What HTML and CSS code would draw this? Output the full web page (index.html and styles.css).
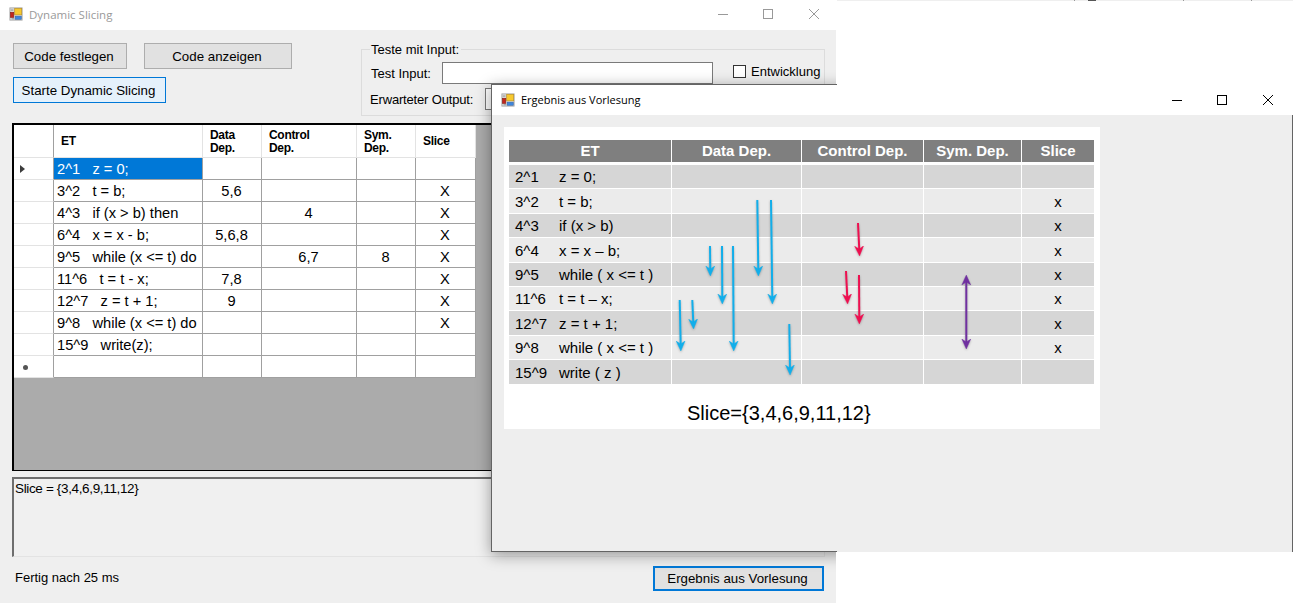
FILE: index.html
```html
<!DOCTYPE html>
<html lang="de">
<head>
<meta charset="utf-8">
<title>Dynamic Slicing</title>
<link rel="stylesheet" href="styles.css">
</head>
<body>
<svg class="defs" width="0" height="0" aria-hidden="true">
  <defs>
    <symbol id="app" viewBox="0 0 16 16">
      <rect x="1" y="1" width="14" height="14" fill="#d9d9d9" stroke="#a8a8a8"/>
      <rect x="6.5" y="1.5" width="8" height="7.5" fill="#f7c92e" stroke="#b9912a" stroke-width=".8"/>
      <rect x="1.5" y="6" width="4" height="6" fill="#c3261c" stroke="#7f1c14" stroke-width=".6"/>
      <rect x="7" y="10.5" width="7" height="3.5" fill="#3f86dc" stroke="#2d62a8" stroke-width=".6"/>
      <rect x="2" y="3" width="3" height="1" fill="#8a8a8a"/>
      <rect x="3" y="13" width="3" height="1" fill="#8a8a8a"/>
    </symbol>
    <symbol id="i-min" viewBox="0 0 10 10"><path d="M0 5.5H10" stroke="currentColor" fill="none"/></symbol>
    <symbol id="i-max" viewBox="0 0 10 10"><rect x=".5" y=".5" width="9" height="9" stroke="currentColor" fill="none"/></symbol>
    <symbol id="i-close" viewBox="0 0 10 10"><path d="M0 0L10 10M10 0L0 10" stroke="currentColor" fill="none"/></symbol>
    <marker id="m-blue" viewBox="0 0 10 10" refX="4" refY="5" markerWidth="10" markerHeight="10" markerUnits="userSpaceOnUse" orient="auto"><path d="M0 .5L10 5L0 9.5L3 5Z" fill="#12aeea" stroke="#12aeea" stroke-width=".4"/></marker>
    <marker id="m-red" viewBox="0 0 10 10" refX="4" refY="5" markerWidth="10" markerHeight="10" markerUnits="userSpaceOnUse" orient="auto"><path d="M0 .5L10 5L0 9.5L3 5Z" fill="#ee0f50" stroke="#ee0f50" stroke-width=".4"/></marker>
    <marker id="m-purple" viewBox="0 0 10 10" refX="4" refY="5" markerWidth="10" markerHeight="10" markerUnits="userSpaceOnUse" orient="auto-start-reverse"><path d="M0 .5L10 5L0 9.5L3 5Z" fill="#7030a0" stroke="#7030a0" stroke-width=".4"/></marker>
  </defs>
</svg>

<div class="top-strip"></div>

<div class="window main-window">
  <div class="titlebar titlebar-main">
    <svg class="app-icon"><use href="#app"/></svg>
    <span class="title title-inactive">Dynamic Slicing</span>
    <div class="controls controls-inactive">
      <svg class="ctl"><use href="#i-min"/></svg>
      <svg class="ctl"><use href="#i-max"/></svg>
      <svg class="ctl ctl-close"><use href="#i-close"/></svg>
    </div>
  </div>
  <div class="content">
    <div class="top-row">
      <div class="button-col">
        <div class="button-row">
          <div class="btn btn-set">Code festlegen</div>
          <div class="btn btn-show">Code anzeigen</div>
        </div>
        <div class="btn btn-start">Starte Dynamic Slicing</div>
      </div>
      <div class="group">
        <div class="legend">Teste mit Input:</div>
        <div class="group-row group-row-first">
          <span class="lbl lbl-input">Test Input:</span>
          <div class="input input-test"></div>
          <div class="check"></div>
          <span class="lbl lbl-check">Entwicklung</span>
        </div>
        <div class="group-row">
          <span class="lbl lbl-output">Erwarteter Output:</span>
          <div class="input input-output"></div>
        </div>
      </div>
    </div>

    <div class="grid">
      <table class="dgv">
        <colgroup>
          <col class="c0"><col class="c1"><col class="c2"><col class="c3"><col class="c4"><col class="c5">
        </colgroup>
        <thead>
          <tr>
            <th class="rh"></th>
            <th class="h-et">ET</th>
            <th>Data<br>Dep.</th>
            <th>Control<br>Dep.</th>
            <th>Sym.<br>Dep.</th>
            <th>Slice</th>
          </tr>
        </thead>
        <tbody>
          <tr><td class="rh"><span class="cur"></span></td><td class="code sel">2^1   z = 0;</td><td></td><td></td><td></td><td></td></tr>
          <tr><td class="rh"></td><td class="code">3^2   t = b;</td><td>5,6</td><td></td><td></td><td>X</td></tr>
          <tr><td class="rh"></td><td class="code">4^3   if (x &gt; b) then</td><td></td><td>4</td><td></td><td>X</td></tr>
          <tr><td class="rh"></td><td class="code">6^4   x = x - b;</td><td>5,6,8</td><td></td><td></td><td>X</td></tr>
          <tr><td class="rh"></td><td class="code">9^5   while (x &lt;= t) do</td><td></td><td>6,7</td><td>8</td><td>X</td></tr>
          <tr><td class="rh"></td><td class="code">11^6   t = t - x;</td><td>7,8</td><td></td><td></td><td>X</td></tr>
          <tr><td class="rh"></td><td class="code">12^7   z = t + 1;</td><td>9</td><td></td><td></td><td>X</td></tr>
          <tr><td class="rh"></td><td class="code">9^8   while (x &lt;= t) do</td><td></td><td></td><td></td><td>X</td></tr>
          <tr><td class="rh"></td><td class="code">15^9   write(z);</td><td></td><td></td><td></td><td></td></tr>
          <tr><td class="rh rh-new"><span class="dot"></span></td><td class="code"></td><td></td><td></td><td></td><td></td></tr>
        </tbody>
      </table>
    </div>

    <div class="output">Slice = {3,4,6,9,11,12}</div>

    <div class="status-row">
      <span class="lbl">Fertig nach 25 ms</span>
      <div class="btn btn-result">Ergebnis aus Vorlesung</div>
    </div>
  </div>
  <div class="win-shadow"></div>
</div>

<div class="window result-window">
  <div class="titlebar titlebar-result">
    <svg class="app-icon"><use href="#app"/></svg>
    <span class="title title-result">Ergebnis aus Vorlesung</span>
    <div class="controls">
      <svg class="ctl"><use href="#i-min"/></svg>
      <svg class="ctl"><use href="#i-max"/></svg>
      <svg class="ctl ctl-close"><use href="#i-close"/></svg>
    </div>
  </div>
  <div class="result-body">
    <div class="figure">
      <div class="fig-table">
        <div class="fig-row fig-head"><div>ET</div><div>Data Dep.</div><div>Control Dep.</div><div>Sym. Dep.</div><div>Slice</div></div>
        <div class="fig-row dark first"><div class="et"><span>2^1</span><span>z = 0;</span></div><div></div><div></div><div></div><div></div></div>
        <div class="fig-row light"><div class="et"><span>3^2</span><span>t = b;</span></div><div></div><div></div><div></div><div>x</div></div>
        <div class="fig-row dark"><div class="et"><span>4^3</span><span>if (x &gt; b)</span></div><div></div><div></div><div></div><div>x</div></div>
        <div class="fig-row light"><div class="et"><span>6^4</span><span>x = x – b;</span></div><div></div><div></div><div></div><div>x</div></div>
        <div class="fig-row dark"><div class="et"><span>9^5</span><span>while ( x &lt;= t )</span></div><div></div><div></div><div></div><div>x</div></div>
        <div class="fig-row light"><div class="et"><span>11^6</span><span>t = t – x;</span></div><div></div><div></div><div></div><div>x</div></div>
        <div class="fig-row dark"><div class="et"><span>12^7</span><span>z = t + 1;</span></div><div></div><div></div><div></div><div>x</div></div>
        <div class="fig-row light"><div class="et"><span>9^8</span><span>while ( x &lt;= t )</span></div><div></div><div></div><div></div><div>x</div></div>
        <div class="fig-row dark"><div class="et"><span>15^9</span><span>write ( z )</span></div><div></div><div></div><div></div><div></div></div>
      </div>
      <div class="fig-slice">Slice={3,4,6,9,11,12}</div>
      <!-- coordinates: figure origin is at page (504,127) -->
      <svg class="arrows" width="596" height="302" viewBox="504 127 596 302">
        <g class="blue">
          <path d="M757.3 200L758.3 270"/>
          <path d="M771 200L772.3 298"/>
          <path d="M710 246L710.3 270"/>
          <path d="M722 246L722.3 298"/>
          <path d="M733 246L733.7 345"/>
          <path d="M679.7 300L680.7 345"/>
          <path d="M692.3 300L693.3 323"/>
          <path d="M789.3 324L790 369"/>
        </g>
        <g class="red">
          <path d="M858 223L859.3 250"/>
          <path d="M846 271L847.3 298"/>
          <path d="M859 275L859.3 318"/>
        </g>
        <path class="purple" d="M966.3 281L966.3 343"/>
      </svg>
    </div>
  </div>
  <div class="edge edge-top"></div>
  <div class="edge edge-bottom"></div>
</div>
</body>
</html>
```

FILE: styles.css
```css
* { box-sizing: border-box; }
html, body { margin: 0; padding: 0; }
body {
  width: 1293px;
  height: 603px;
  position: relative;
  overflow: hidden;
  background: #fff;
  font-family: "Liberation Sans", Arial, sans-serif;
  font-size: 13px;
  color: #000;
}
.defs { position: absolute; }

.top-strip {
  position: absolute;
  left: 837px;
  top: 0;
  width: 456px;
  height: 1px;
  background:
    linear-gradient(#999, #999) 237px 0 / 1px 1px no-repeat,
    linear-gradient(#555, #555) 251px 0 / 8px 1px no-repeat,
    linear-gradient(#999, #999) 346px 0 / 1px 1px no-repeat,
    linear-gradient(#999, #999) 414px 0 / 1px 1px no-repeat,
    #efefef;
}

.window { position: absolute; }

.main-window {
  left: 0;
  top: 0;
  width: 836px;
  height: 603px;
  background: #efefef;
  display: flex;
  flex-direction: column;
  overflow: hidden;
}
.win-shadow {
  position: absolute;
  left: 491px;
  top: 84px;
  width: 802px;
  height: 468px;
  box-shadow: 0 3px 14px rgba(0, 0, 0, .38);
}

.titlebar {
  height: 30px;
  flex: none;
  background: #fff;
  display: flex;
  align-items: center;
  padding-left: 9px;
}
.titlebar-main { padding-bottom: 2px; }
.app-icon { width: 14px; height: 14px; margin-right: 6px; flex: none; }
.title { font-family: "Open Sans", sans-serif; font-size: 11.5px; color: #000; }
.title-inactive { color: #9a9a9a; }
.title-result { font-size: 11px; }
.controls {
  margin-left: auto;
  display: flex;
  gap: 35px;
  padding-right: 19px;
  color: #000;
}
.controls-inactive { color: #999; padding-right: 17px; }
.ctl { width: 10px; height: 10px; display: block; }
.ctl-close { margin-left: 1px; }

.content {
  flex: 1;
  padding: 13px 11px 0 12px;
  display: flex;
  flex-direction: column;
}
.top-row { height: 80px; flex: none; display: flex; }
.button-col {
  width: 349px;
  padding-left: 1px;
  display: flex;
  flex-direction: column;
  gap: 8px;
}
.button-row { display: flex; gap: 17px; }
.btn {
  height: 26px;
  display: flex;
  align-items: center;
  justify-content: center;
  padding-right: 2px;
  background: #e1e1e1;
  border: 1px solid #adadad;
  color: #000;
  font-size: 13.3px;
}
.btn-set { width: 114px; }
.btn-show { width: 148px; }
.btn-start { width: 153px; background: #e5f1fb; border-color: #0078d7; }
.btn-result { width: 171px; height: 25px; border: 2px solid #0078d7; }

.group {
  margin-top: 6px;
  width: 464px;
  height: 67px;
  border: 1px solid #dcdcdc;
  padding-left: 8px;
  padding-right: 3px;
}
.legend {
  display: table;
  background: #efefef;
  padding: 0 2px 0 1px;
  margin-top: -7px;
  height: 14px;
  line-height: 14px;
}
.group-row { display: flex; align-items: center; margin-top: 4px; }
.group-row-first { margin-top: 5px; }
.lbl { white-space: nowrap; }
.lbl-input { width: 72px; padding-left: 1px; }
.lbl-output { width: 115px; letter-spacing: -.17px; }
.lbl-check { margin-bottom: 4px; }
.input {
  height: 22px;
  background: #fff;
  border: 1px solid #7a7a7a;
}
.input-test { width: 271px; }
.input-output { width: 300px; }
.check {
  width: 13px;
  height: 13px;
  background: #fff;
  border: 1px solid #333;
  margin: 0 5px 4px 20px;
}

.grid {
  height: 348px;
  flex: none;
  background: #ababab;
  border-style: solid;
  border-color: #000;
  border-width: 2px 0 1px 2px;
  width: 813px;
}
.dgv {
  border-collapse: separate;
  border-spacing: 0;
  table-layout: fixed;
  width: 462px;
  background: #fff;
}
.c0 { width: 40px; }
.c1 { width: 149px; }
.c2 { width: 59px; }
.c3 { width: 95px; }
.c4 { width: 59px; }
.c5 { width: 60px; }
.dgv th {
  height: 33px;
  padding: 1px 0 0 7px;
  text-align: left;
  font-size: 12px;
  line-height: 13px;
  font-weight: bold;
  letter-spacing: -.3px;
  border-right: 1px solid #e3e3e3;
  border-bottom: 1px solid #e3e3e3;
}
.dgv td {
  height: 22px;
  padding: 0 1px 0 0;
  text-align: center;
  white-space: pre;
  font-size: 14.67px;
  border-right: 1px solid #a0a0a0;
  border-bottom: 1px solid #a0a0a0;
  line-height: 14px;
}
.dgv td.code { text-align: left; padding-left: 3px; }
.dgv td.sel { background: #0078d7; color: #fff; }
.dgv td.rh { border-color: #e3e3e3; border-right-color: #a0a0a0; text-align: left; padding-left: 6px; }
.dgv th.rh { border-right-color: #a0a0a0; }
.cur {
  display: block;
  width: 0;
  height: 0;
  border-style: solid;
  border-width: 4.5px 0 4.5px 5px;
  border-color: transparent transparent transparent #3c3c3c;
}
.dot {
  display: block;
  width: 5px;
  height: 5px;
  margin: 1px 0 0 3px;
  border-radius: 50%;
  background: #555;
}

.output {
  margin-top: 6px;
  height: 80px;
  flex: none;
  border-style: solid;
  border-color: #6e6e6e #e3e3e3 #e3e3e3 #6e6e6e;
  border-width: 2px 1px 1px 2px;
  background: #f0f0f0;
  padding: 2px 1px;
  font-size: 13.5px;
  line-height: 15px;
  letter-spacing: -.35px;
}
.status-row {
  flex: 1;
  display: flex;
  justify-content: space-between;
  align-items: flex-start;
  padding: 9px 1px 0 3px;
}
.status-row .lbl { margin-top: 4px; }

.result-window {
  left: 491px;
  top: 84px;
  width: 802px;
  height: 468px;
  border-left: 1px solid #646464;
  display: flex;
  flex-direction: column;
}
.edge { position: absolute; left: 0; width: 345px; height: 1px; background: #646464; }
.edge-top { top: 0; }
.edge-bottom { bottom: 0; }
.titlebar-result { height: 31px; margin-right: 1px; padding-left: 9px; }
.result-body {
  flex: 1;
  background: #eee;
  border-right: 1px solid #646464;
  padding: 12px 0 0 12px;
  position: relative;
}
.figure {
  position: relative;
  width: 596px;
  height: 302px;
  background: #fff;
  padding: 13px 0 0 5px;
}
.fig-table { display: flex; flex-direction: column; gap: 1px; width: 585px; }
.fig-row {
  display: grid;
  grid-template-columns: 162px 129px 121px 97px 72px;
  column-gap: 1px;
  height: 23.4px;
  font-size: 15px;
}
.fig-row > div {
  display: flex;
  align-items: center;
  justify-content: center;
  padding-top: .4px;
}
.fig-head { height: 22px; margin-bottom: 2px; }
.fig-head > div {
  background: #7f7f7f;
  color: #fff;
  font-weight: bold;
  font-size: 15px;
  padding: 0 0 1px;
}
.dark > div { background: #d6d6d6; }
.light > div { background: #ebebeb; }
.fig-row > .et { justify-content: flex-start; padding-left: 6px; }
.et span:first-child { width: 44px; flex: none; }
.fig-slice {
  margin-top: 17px;
  margin-left: 178px;
  font-size: 20px;
  line-height: 24px;
}
.arrows {
  position: absolute;
  left: 0;
  top: 0;
  fill: none;
  stroke-width: 2;
}
.arrows g, .purple { filter: drop-shadow(0 1px 1px rgba(0, 0, 0, .25)); }
.blue path { stroke: #12aeea; marker-end: url(#m-blue); }
.red path { stroke: #ee0f50; marker-end: url(#m-red); }
.purple { stroke: #7030a0; marker-start: url(#m-purple); marker-end: url(#m-purple); }
```
